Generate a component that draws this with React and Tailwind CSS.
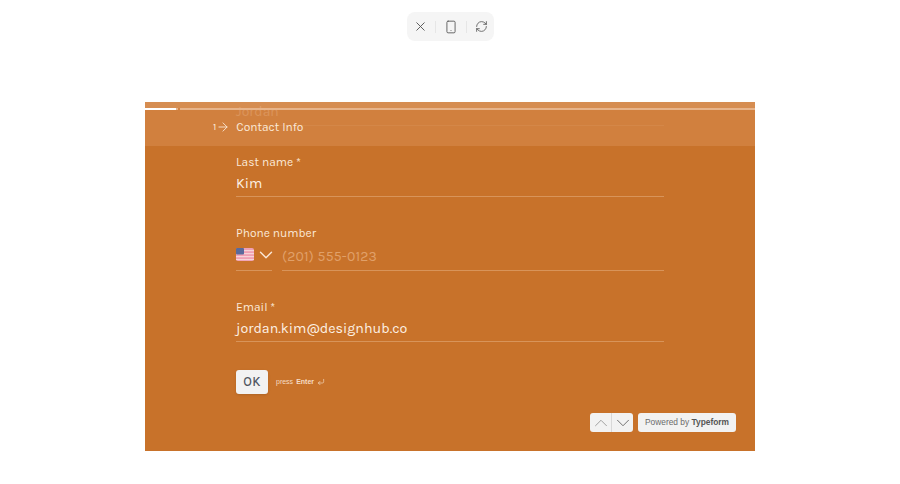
import { X, Smartphone, RefreshCw, ChevronUp, ChevronDown, ArrowRight, CornerDownLeft } from 'lucide-react';

function FlagUS() {
  return (
    <svg width="18" height="13" viewBox="0 0 18 13" className="block shrink-0">
      <rect width="18" height="13" rx="2" fill="#f0a0b4" />
      <rect y="2" width="18" height="1.2" fill="#f6d3d8" />
      <rect y="5" width="18" height="1.2" fill="#f6d3d8" />
      <rect y="8" width="18" height="1.2" fill="#f6d3d8" />
      <rect y="11" width="18" height="1.1" fill="#f6d3d8" />
      <rect width="8" height="6.5" rx="1" fill="#5a6a9c" />
    </svg>
  );
}

export default function App() {
  return (
    <div className="flex h-[484px] w-[900px] flex-col items-center overflow-hidden bg-white font-['Karla','Open_Sans',sans-serif]">
      <div className="mt-3 flex h-[29px] w-[87px] items-center justify-between rounded-lg bg-[#f5f5f5] px-[6px] text-[#555]">
        <X className="h-[15px] w-[15px]" strokeWidth={1.5} />
        <span className="h-3 w-px bg-[#e6e6e6]" />
        <Smartphone className="h-[14px] w-[14px]" strokeWidth={1.5} />
        <span className="h-3 w-px bg-[#e6e6e6]" />
        <RefreshCw className="h-[13px] w-[13px]" strokeWidth={1.5} />
      </div>

      <div className="relative mt-[61px] h-[349px] w-[610px] overflow-hidden bg-[#c8722a] text-[#fbe9d8]">
        <div className="flex flex-col px-[91px]">
          <p className="h-6 border-b border-[#d8945a] text-[14px] leading-5 text-[#f6d5b4]">Jordan</p>
          <p className="mt-[26px] text-[12px] leading-5">Last name *</p>
          <p className="h-[25px] border-b border-[#d8945a] text-[14.25px] leading-6 text-[#fdf1e5]">Kim</p>
          <p className="mt-[26px] text-[12px] leading-5">Phone number</p>
          <div className="mt-[2px] flex gap-[10px]">
            <div className="flex h-[26px] w-[36px] items-start justify-between border-b border-[#d8945a] pt-[3px]">
              <FlagUS />
              <ChevronDown className="mr-[-5px] mt-[-4px] h-[22px] w-[22px] shrink-0" strokeWidth={1.5} />
            </div>
            <p className="h-[26px] flex-1 border-b border-[#d8945a] pt-[2px] text-[14px] leading-5 tracking-[0.2px] text-[#e0a069]">(201) 555-0123</p>
          </div>
          <p className="mt-[26px] text-[12px] leading-5">Email *</p>
          <p className="h-[25px] border-b border-[#d8945a] text-[14.25px] leading-6 text-[#fdf1e5]">jordan.kim@designhub.co</p>
          <div className="mt-[28px] flex items-center gap-2">
            <button type="button" className="h-[24px] w-[32px] rounded-[3px] bg-[#f2f2f2] text-[13px] font-medium tracking-[0.4px] text-[#4f5560] shadow-sm">OK</button>
            <p className="flex items-center gap-[3px] font-['Liberation_Sans',sans-serif] text-[7px] text-[#f5dcc4]">
              press <b>Enter</b> <CornerDownLeft className="h-2 w-2" />
            </p>
          </div>
        </div>

        {/* fixed header, lies over the scrolled form */}
        <div className="absolute inset-x-0 top-0 h-[44px] bg-[#d38344]/80">
          <div className="h-[6px] bg-white/10" />
          <div className="flex h-[2px] gap-[2px] bg-[#e8b48a]">
            <span className="w-[31px] bg-white" />
            <span className="w-[2px] bg-[#d38344]" />
          </div>
          <div className="mt-[7px] flex items-center pl-[68px]">
            <span className="text-[10px] leading-5">1</span>
            <ArrowRight className="h-[14px] w-[14px]" strokeWidth={1.5} />
            <span className="ml-[6px] text-[12px] leading-5">Contact Info</span>
          </div>
        </div>

        <div className="absolute bottom-[19px] right-[19px] flex gap-[5px]">
          <div className="flex h-[19px] overflow-hidden rounded-[3px] bg-[#f2f2f2] text-[#666]">
            <span className="flex w-[22px] items-center justify-center border-r border-[#d8d8d8] text-[#999]"><ChevronUp className="h-[22px] w-[22px] shrink-0" strokeWidth={1} /></span>
            <span className="flex w-[21px] items-center justify-center"><ChevronDown className="h-[22px] w-[22px] shrink-0" strokeWidth={1} /></span>
          </div>
          <div className="flex h-[19px] w-[98px] items-center justify-center rounded-[3px] bg-[#f2f2f2] font-['Liberation_Sans',sans-serif] text-[8.4px] text-[#6b6b6b]">
            Powered by&nbsp;<b className="text-[#555]">Typeform</b>
          </div>
        </div>
      </div>
    </div>
  );
}
